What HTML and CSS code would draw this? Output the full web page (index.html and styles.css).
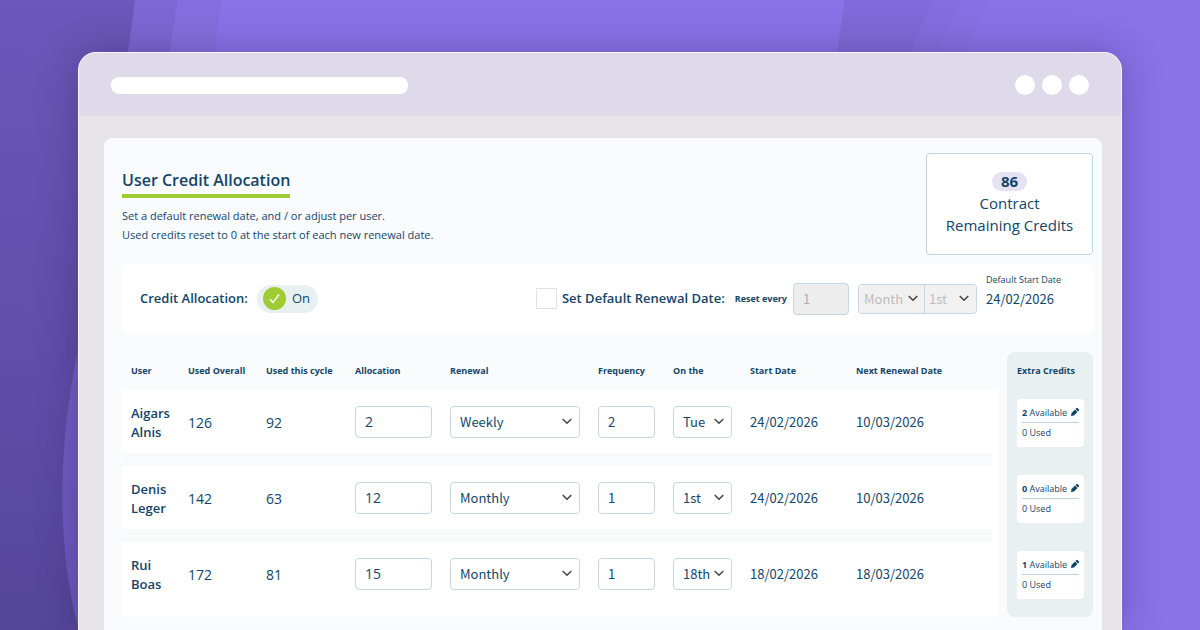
FILE: index.html
```html
<!DOCTYPE html>
<html lang="en">
<head>
<meta charset="utf-8">
<title>User Credit Allocation</title>
<link rel="stylesheet" href="styles.css">
</head>
<body>
<svg class="backdrop" viewBox="0 0 1200 630" preserveAspectRatio="none" aria-hidden="true">
  <defs>
    <linearGradient id="deep" gradientUnits="userSpaceOnUse" x1="60" y1="0" x2="0" y2="630">
      <stop offset="0" stop-color="#6a58ba"/><stop offset="0.5" stop-color="#604fad"/><stop offset="1" stop-color="#54469a"/>
    </linearGradient>
    <linearGradient id="mid" x1="0" y1="0" x2="0" y2="1">
      <stop offset="0" stop-color="#7c69d4"/><stop offset="1" stop-color="#6b58bd"/>
    </linearGradient>
  </defs>
  <rect width="1200" height="630" fill="#8873e8"/>
  <path d="M0 0H222C212 60 208 120 190 200L160 630H0Z" fill="#8370de"/>
  <path d="M0 0H178C168 60 160 120 150 200L140 630H0Z" fill="url(#mid)"/>
  <path d="M0 0H135C122 100 104 230 78 350C57 450 57 550 79 630H0Z" fill="url(#deep)"/>
  <path d="M845 0H990Q968 40 950 100H830Z" fill="#8671e4"/>
  <path d="M845 0H963Q940 40 920 100H830Z" fill="#836fdf"/>
  <path d="M845 0H934Q910 50 890 100H830Z" fill="#7f6bd9"/>
</svg>
<main class="window">
  <header class="chrome">
    <div class="address"></div>
    <div class="dots"><span></span><span></span><span></span></div>
  </header>
  <div class="viewport">
    <section class="panel">
      <div class="intro">
        <div>
          <h1 class="title">User Credit Allocation</h1>
          <p class="lead">Set a default renewal date, and / or adjust per user.<br>Used credits reset to 0 at the start of each new renewal date.</p>
        </div>
        <div class="summary"><strong class="count">86</strong><span>Contract</span><span>Remaining Credits</span></div>
      </div>
      <div class="toolbar">
        <span class="strong">Credit Allocation:</span>
        <button class="toggle" type="button" aria-pressed="true">
          <svg width="23" height="23" viewBox="0 0 23 23" aria-hidden="true"><circle cx="11.500" cy="11.500" r="11.500" fill="#9fcc35"/><path d="M7 12.300L10 15.500L16 7.500" fill="none" stroke="#fff" stroke-width="1.400"/></svg>
          On
        </button>
        <label class="default strong"><input class="check" type="checkbox">Set Default Renewal Date:</label>
        <label class="every" for="every">Reset every</label>
        <input class="field every-field" id="every" type="text" value="1" disabled>
        <div class="pair">
          <select class="field" aria-label="Period" disabled><option>Month</option></select>
          <select class="field" aria-label="Day" disabled><option>1st</option></select>
        </div>
        <div class="start"><span class="start-label">Default Start Date</span><span class="date">24/02/2026</span></div>
      </div>
      <table class="users">
        <colgroup><col class="c-user"><col class="c-overall"><col class="c-cycle"><col class="c-alloc"><col class="c-renewal"><col class="c-freq"><col class="c-on"><col class="c-start"><col class="c-next"><col class="c-edge"><col class="c-extra"></colgroup>
        <thead>
          <tr><th>User</th><th>Used Overall</th><th>Used this cycle</th><th>Allocation</th><th>Renewal</th><th>Frequency</th><th>On the</th><th>Start Date</th><th>Next Renewal Date</th><td></td><th class="extra">Extra Credits</th></tr>
        </thead>
        <tbody>
          <tr>
            <td class="name">Aigars Alnis</td><td class="number">126</td><td class="number">92</td>
            <td><input class="field plain" type="text" value="2" aria-label="Allocation"></td>
            <td><select class="field" aria-label="Renewal"><option>Weekly</option></select></td>
            <td><input class="field" type="text" value="2" aria-label="Frequency"></td>
            <td><select class="field" aria-label="On the"><option>Tue</option></select></td>
            <td class="date">24/02/2026</td><td class="date">10/03/2026</td><td class="edge"></td>
            <td class="extra"><div class="card"><div class="avail"><span><b>2</b> Available</span><button class="edit" type="button" aria-label="Edit"><svg width="8" height="8" viewBox="0 0 16 16"><path d="M0 16l1-6 7-7 5 5-7 7zM9 2l2-2h2l3 3v2l-2 2z"/></svg></button></div><div>0 Used</div></div></td>
          </tr>
          <tr>
            <td class="name">Denis Leger</td><td class="number">142</td><td class="number">63</td>
            <td><input class="field plain" type="text" value="12" aria-label="Allocation"></td>
            <td><select class="field" aria-label="Renewal"><option>Monthly</option></select></td>
            <td><input class="field" type="text" value="1" aria-label="Frequency"></td>
            <td><select class="field" aria-label="On the"><option>1st</option></select></td>
            <td class="date">24/02/2026</td><td class="date">10/03/2026</td><td class="edge"></td>
            <td class="extra"><div class="card"><div class="avail"><span><b>0</b> Available</span><button class="edit" type="button" aria-label="Edit"><svg width="8" height="8" viewBox="0 0 16 16"><path d="M0 16l1-6 7-7 5 5-7 7zM9 2l2-2h2l3 3v2l-2 2z"/></svg></button></div><div>0 Used</div></div></td>
          </tr>
          <tr>
            <td class="name">Rui Boas</td><td class="number">172</td><td class="number">81</td>
            <td><input class="field plain" type="text" value="15" aria-label="Allocation"></td>
            <td><select class="field" aria-label="Renewal"><option>Monthly</option></select></td>
            <td><input class="field" type="text" value="1" aria-label="Frequency"></td>
            <td><select class="field" aria-label="On the"><option>18th</option></select></td>
            <td class="date">18/02/2026</td><td class="date">18/03/2026</td><td class="edge"></td>
            <td class="extra"><div class="card"><div class="avail"><span><b>1</b> Available</span><button class="edit" type="button" aria-label="Edit"><svg width="8" height="8" viewBox="0 0 16 16"><path d="M0 16l1-6 7-7 5 5-7 7zM9 2l2-2h2l3 3v2l-2 2z"/></svg></button></div><div>0 Used</div></div></td>
          </tr>
        </tbody>
      </table>
    </section>
  </div>
</main>
</body>
</html>
```
FILE: styles.css
```css
* { box-sizing: border-box; }
html { height: 100%; }
body {
  margin: 0;
  height: 100%;
  overflow: hidden;
  display: flex;
  background: #8873e8;
  color: #124568;
  font-family: "Open Sans", "Noto Sans", sans-serif;
  font-size: 13px;
  line-height: 19px;
}
.backdrop { position: absolute; inset: 0; width: 100%; height: 100%; z-index: -1; }
.window {
  flex: 1;
  min-width: 0;
  margin: 52px 78px 0;
  display: flex;
  flex-direction: column;
  border: 1px solid #f8f6fc;
  border-bottom: 0;
  border-radius: 18px 18px 0 0;
  background: #e6e4e9;
  box-shadow: 0 0 40px rgba(30, 20, 60, 0.3);
  overflow: hidden;
}
.chrome {
  display: flex;
  align-items: center;
  justify-content: space-between;
  height: 63px;
  padding: 0 32px;
  background: #dedaea;
  flex: none;
}
.address { width: 297px; height: 17px; border-radius: 8px; background: #fff; margin-top: 2px; }
.dots { display: flex; gap: 7px; }
.dots span { width: 20px; height: 20px; border-radius: 50%; background: #fff; }
.viewport { flex: 1; display: flex; padding: 22px 19px 0 25px; }
.panel {
  flex: 1;
  min-width: 0;
  padding: 15px 9px 0 18px;
  border-radius: 8px 8px 0 0;
  background: #fafbfd;
}
.intro { display: flex; justify-content: space-between; align-items: flex-start; }
.title {
  display: inline-block;
  margin: 14px 0 0;
  padding-bottom: 1px;
  border-bottom: 4px solid #9fcc35;
  font-size: 16px;
  line-height: 26px;
  font-weight: 600;
}
.lead { margin: 8px 0 0; font-size: 11px; }
.summary {
  width: 167px;
  height: 102px;
  display: flex;
  flex-direction: column;
  align-items: center;
  justify-content: center;
  border: 1px solid #bdd3e0;
  border-radius: 4px;
  background: #fff;
  font-size: 15px;
  line-height: 22px;
}
.count { padding: 0 9px; margin-bottom: 1px; border-radius: 10px; background: #e6e2f2; line-height: 19px; font-weight: 700; }
.toolbar {
  display: flex;
  align-items: center;
  height: 69px;
  margin-top: 9px;
  padding-left: 18px;
  border-radius: 5px;
  background: #fff;
}
.strong { font-weight: 600; white-space: nowrap; }
.toggle {
  display: flex;
  align-items: center;
  gap: 6px;
  height: 28px;
  margin-left: 9px;
  padding: 0 8px 0 6px;
  border: 0;
  border-radius: 14px;
  background: #e8f0f2;
  color: inherit;
  font: inherit;
}
.default { display: flex; align-items: center; gap: 5px; margin-left: auto; }
.check { appearance: none; width: 21px; height: 21px; margin: 0; border: 1px solid #e3e3e3; background: #fff; }
.every { margin: 0 6px 0 10px; font-size: 9px; font-weight: 700; white-space: nowrap; }
.field {
  display: block;
  width: 100%;
  height: 32px;
  margin: 0;
  padding: 0 9px;
  border: 1px solid #c3d7e4;
  border-radius: 4px;
  background-color: #fff;
  color: inherit;
  font-family: "Noto Sans CJK JP", sans-serif;
  font-size: 13px;
  line-height: 19px;
}
.plain { font-family: "Open Sans", sans-serif; font-size: 14px; }
select.field {
  appearance: none;
  padding-right: 0;
  background-image: url("data:image/svg+xml,%3Csvg xmlns='http://www.w3.org/2000/svg' width='10' height='7' viewBox='0 0 10 7'%3E%3Cpath d='M.7 1L5 5.300L9.300 1' fill='none' stroke='%23454545' stroke-width='1.500'/%3E%3C/svg%3E");
  background-repeat: no-repeat;
  background-position: right 7px center;
}
.field:disabled { background-color: #ededed; color: #adadad; opacity: 1; }
.every-field { width: 56px; flex: none; }
.pair { display: flex; flex: none; width: 119px; margin: 0 9px; border: 1px solid #c3d7e4; border-radius: 4px; background: #f1f1f1; overflow: hidden; }
.pair .field:disabled { flex: 1; height: 28px; padding-left: 4px; border: 0; border-radius: 0; background-color: #f1f1f1; color: #bdbdbd; }
.pair .field:disabled:first-child { flex: none; width: 66px; padding-left: 5px; border-right: 1px solid #c3d7e4; background-position: right 6px center; }
.start { align-self: flex-start; display: flex; flex-direction: column; width: 107px; padding-top: 6px; }
.start-label { font-size: 9px; }
.date { font-family: "Noto Sans CJK JP", sans-serif; }
.users { width: 100%; margin-top: 19px; table-layout: fixed; border-spacing: 0; }
.c-user { width: 57px; }
.c-overall { width: 78px; }
.c-cycle { width: 89px; }
.c-alloc { width: 95px; }
.c-renewal { width: 148px; }
.c-freq { width: 75px; }
.c-on { width: 77px; }
.c-start { width: 106px; }
.c-next { width: 145px; }
.c-edge { width: 15px; }
.c-extra { width: 86px; }
.users th { height: 38px; padding: 0 0 2px 9px; font-size: 9px; font-weight: 700; text-align: left; white-space: nowrap; }
.users tbody td { height: 76px; padding: 0 9px; border-bottom: 13px solid #f9fafc; background: #fff; }
.users tbody tr:last-child td { height: 75px; border-bottom-width: 12px; border-bottom-color: #fff; }
.users tbody .name { padding: 2px 0 0 9px; font-weight: 600; }
.users tbody .number { padding-top: 2px; font-size: 14px; }
.users tbody .edge,
.users tbody tr:last-child .edge { padding: 0; border: 0; background: linear-gradient(to right, #fff 6px, transparent 6px); }
.users .extra,
.users tbody tr:last-child .extra { background: #e8f0f2; border-color: #e8f0f2; }
.users th.extra { padding-left: 10px; border-radius: 8px 8px 0 0; }
.users tbody .extra { padding: 2px 9px 0 10px; }
.users tbody tr:last-child .extra { border-radius: 0 0 8px 8px; }
.card { height: 48px; padding: 4px 5px; border-radius: 4px; background: #fff; font-size: 9px; white-space: nowrap; }
.avail { display: flex; justify-content: space-between; align-items: center; border-bottom: 1px solid #bdd3e0; }
.edit { display: flex; padding: 0; border: 0; background: none; color: inherit; }
.edit svg { fill: currentColor; }
```
